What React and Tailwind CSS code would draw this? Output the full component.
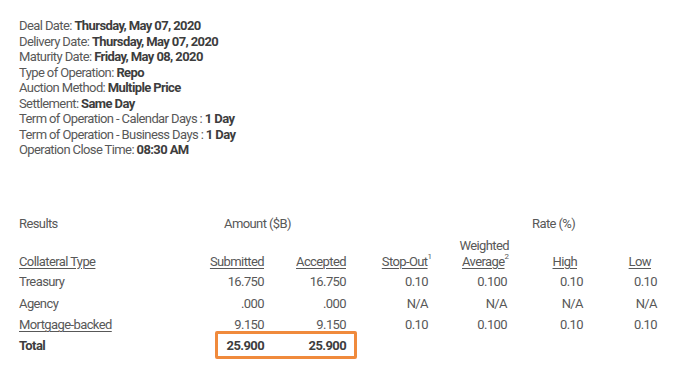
import React from "react";

const info = [
  ["Deal Date: ", "Thursday, May 07, 2020"],
  ["Delivery Date: ", "Thursday, May 07, 2020"],
  ["Maturity Date: ", "Friday, May 08, 2020"],
  ["Type of Operation: ", "Repo"],
  ["Auction Method: ", "Multiple Price"],
  ["Settlement: ", "Same Day"],
  ["Term of Operation - Calendar Days : ", "1 Day"],
  ["Term of Operation - Business Days : ", "1 Day"],
  ["Operation Close Time: ", "08:30 AM"],
];

const cols = "grid grid-cols-[171px_74px_82px_86px_77px_74px_74px]";
const ul = "underline underline-offset-[1.5px] decoration-[1px]";

function DataRow({ name, link, sub, acc, stop, wavg, high, low }) {
  const u = link ? ul : "";
  return (
    <div className={`${cols} h-[21.3px] items-center`}>
      <div><span className={u}>{name}</span></div>
      <div className="text-right"><span className={u}>{sub}</span></div>
      <div className="text-right"><span className={u}>{acc}</span></div>
      <div className="text-right pr-[4px]">{stop}</div>
      <div className="text-right pr-[2px]">{wavg}</div>
      <div className="text-right">{high}</div>
      <div className="text-right">{low}</div>
    </div>
  );
}

export default function App() {
  return (
    <div className="w-[680px] h-[388px] bg-white font-['Roboto',_sans-serif] text-[13px] tracking-[-0.6px] text-[#585858] pt-[18px] pl-[19px] overflow-hidden">
      <div className="leading-[15.5px]">
        {info.map(([l, v], i) => (
          <div key={i}>
            {l}
            <span className="font-bold text-[#3d3d3d]">{v}</span>
          </div>
        ))}
      </div>

      <div className="relative mt-[56px] leading-[15.5px]">
        <div className={`${cols} h-[21px] items-center`}>
          <div>Results</div>
          <div className="col-span-2 pl-[34px]">Amount ($B)</div>
          <div className="col-start-6 col-span-2 pl-[23px]">Rate (%)</div>
        </div>

        <div className={`${cols} mt-[3px] pb-[2px] items-end leading-[16px]`}>
          <div><span className={ul}>Collateral Type</span></div>
          <div className="text-right"><span className={ul}>Submitted</span></div>
          <div className="text-right"><span className={ul}>Accepted</span></div>
          <div className="text-right">
            <span className={ul}>Stop-Out</span>
            <sup className="text-[8px] align-[3px] tracking-normal">1</sup>
          </div>
          <div className="text-right">
            <div>Weighted</div>
            <div>
              <span className={ul}>Average</span>
              <sup className="text-[8px] align-[3px] tracking-normal">2</sup>
            </div>
          </div>
          <div className="text-right pr-[6px]"><span className={ul}>High</span></div>
          <div className="text-right pr-[6px]"><span className={ul}>Low</span></div>
        </div>

        <DataRow name="Treasury" sub="16.750" acc="16.750" stop="0.10" wavg="0.100" high="0.10" low="0.10" />
        <DataRow name="Agency" sub=".000" acc=".000" stop="N/A" wavg="N/A" high="N/A" low="N/A" />
        <DataRow name="Mortgage-backed" link sub="9.150" acc="9.150" stop="0.10" wavg="0.100" high="0.10" low="0.10" />
        <div className={`${cols} h-[21.3px] items-center font-bold text-[#3d3d3d]`}>
          <div>Total</div>
          <div className="text-right">25.900</div>
          <div className="text-right">25.900</div>
        </div>

        <div className="absolute left-[195.5px] bottom-[-2.5px] w-[142px] h-[28.5px] border-[3px] border-[#f08a3c] rounded-[2px]" />
      </div>
    </div>
  );
}
